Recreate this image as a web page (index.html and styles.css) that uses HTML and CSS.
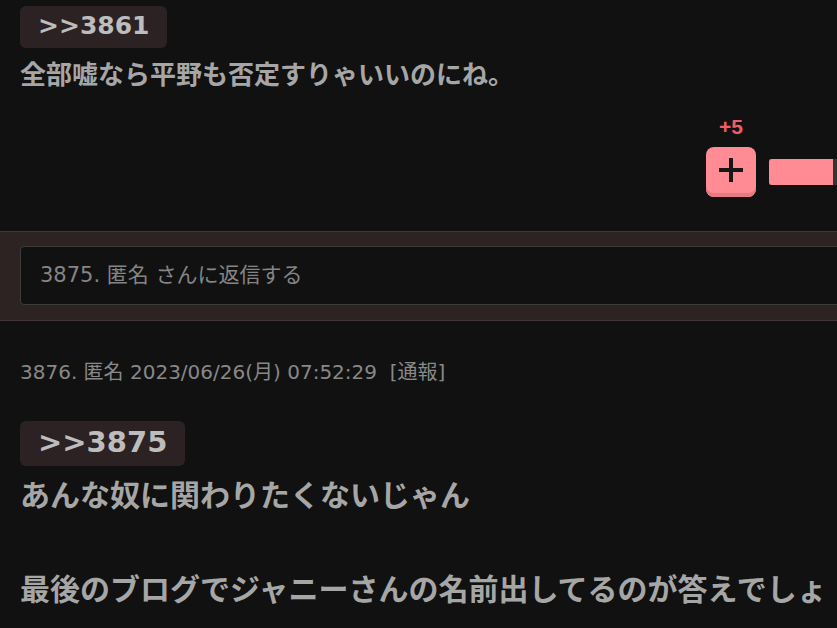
FILE: index.html
```html
<!DOCTYPE html>
<html lang="ja">
<head>
<meta charset="UTF-8">
<meta name="viewport" content="width=device-width, initial-scale=1.0">
<title>コメント</title>
<link rel="stylesheet" href="styles.css">
</head>
<body>

<div class="thread">
    <div class="comment">
        <div class="comment-body lv1">
            <span class="anchor">&gt;&gt;3861</span>
            <p class="text">全部嘘なら平野も否定すりゃいいのにね。</p>
        </div>
        <div class="rating">
            <div class="plus">
                <span class="count">+5</span>
                <button class="plus-btn">
                    <svg width="24" height="24" viewBox="0 0 24 24">
                        <path d="M12 0v24M0 12h24" stroke="#161616" stroke-width="4"/>
                    </svg>
                </button>
            </div>
            <div class="bar"><div class="bar-plus" style="width: 40%"></div></div>
        </div>
    </div>

    <div class="reply-strip">
        <div class="reply-input">3875. 匿名 さんに返信する</div>
    </div>

    <div class="comment">
        <div class="meta">3876. 匿名 2023/06/26(月) 07:52:29 &nbsp;<a class="report">[通報]</a></div>
        <div class="comment-body lv2">
            <span class="anchor">&gt;&gt;3875</span>
            <p class="text">あんな奴に関わりたくないじゃん<br><br>最後のブログでジャニーさんの名前出してるのが答えでしょ</p>
        </div>
    </div>
</div>

</body>
</html>
```

FILE: styles.css
```css
html, body {
    overflow: hidden;
}
body {
    margin: 0;
    background-color: #111;
    font-family: "Noto Sans CJK JP", "Noto Sans", sans-serif;
    color: #a6a6a6;
}
.thread {
    width: 950px;
    padding-top: 6px;
}
.comment {
    padding: 0 20px;
}
.anchor {
    display: inline-block;
    padding: 0 18px 2px;
    background-color: #2c2224;
    border-radius: 6px;
    color: #bdbdbd;
    font-family: "DejaVu Sans", sans-serif;
    font-weight: bold;
}
.text {
    margin: 5px 0 0;
    font-weight: bold;
}
.lv1 .anchor {
    font-size: 25px;
    line-height: 40px;
}
.lv1 .text {
    font-size: 26px;
    line-height: 40px;
}
.lv2 .anchor {
    font-size: 29px;
    line-height: 42px;
    padding-bottom: 3px;
}
.lv2 .text {
    margin-top: 4px;
    font-size: 30px;
    line-height: 47px;
}

/* plus / minus */
.rating {
    display: flex;
    justify-content: flex-end;
    align-items: flex-end;
    gap: 13px;
    margin-top: 22px;
}
.plus {
    display: flex;
    flex-direction: column;
    align-items: center;
    gap: 8px;
}
.count {
    color: #f25c66;
    font-family: "Liberation Sans", Arial, sans-serif;
    font-weight: bold;
    font-size: 21px;
    line-height: 24px;
}
.plus-btn {
    display: flex;
    align-items: center;
    justify-content: center;
    width: 50px;
    height: 50px;
    padding: 0 0 4px;
    border: none;
    border-radius: 8px;
    background-color: #ff8b95;
    box-shadow: inset 0 -4px 0 #e57984;
    cursor: pointer;
}
.bar {
    width: 161px;
    height: 26px;
    margin-bottom: 12px;
    background-color: #333;
}
.bar-plus {
    height: 100%;
    background-color: #ff8b95;
    border-radius: 3px 0 0 3px;
}

/* reply */
.reply-strip {
    margin-top: 34px;
    padding: 14px 0 15px 20px;
    background-color: #2e2323;
    border-top: 1px solid #3e3636;
    border-bottom: 1px solid #3e3636;
}
.reply-input {
    height: 57px;
    padding-left: 19px;
    background-color: #111;
    border: 1px solid #3c3c3c;
    border-radius: 4px;
    color: #858585;
    font-family: "DejaVu Sans", "Noto Sans CJK JP", sans-serif;
    font-size: 21px;
    line-height: 57px;
}

.meta {
    margin: 38px 0 35px;
    color: #888;
    font-family: "DejaVu Sans", "Noto Sans CJK JP", sans-serif;
    font-size: 20px;
    line-height: 27px;
}
.report {
    color: #888;
}
```
